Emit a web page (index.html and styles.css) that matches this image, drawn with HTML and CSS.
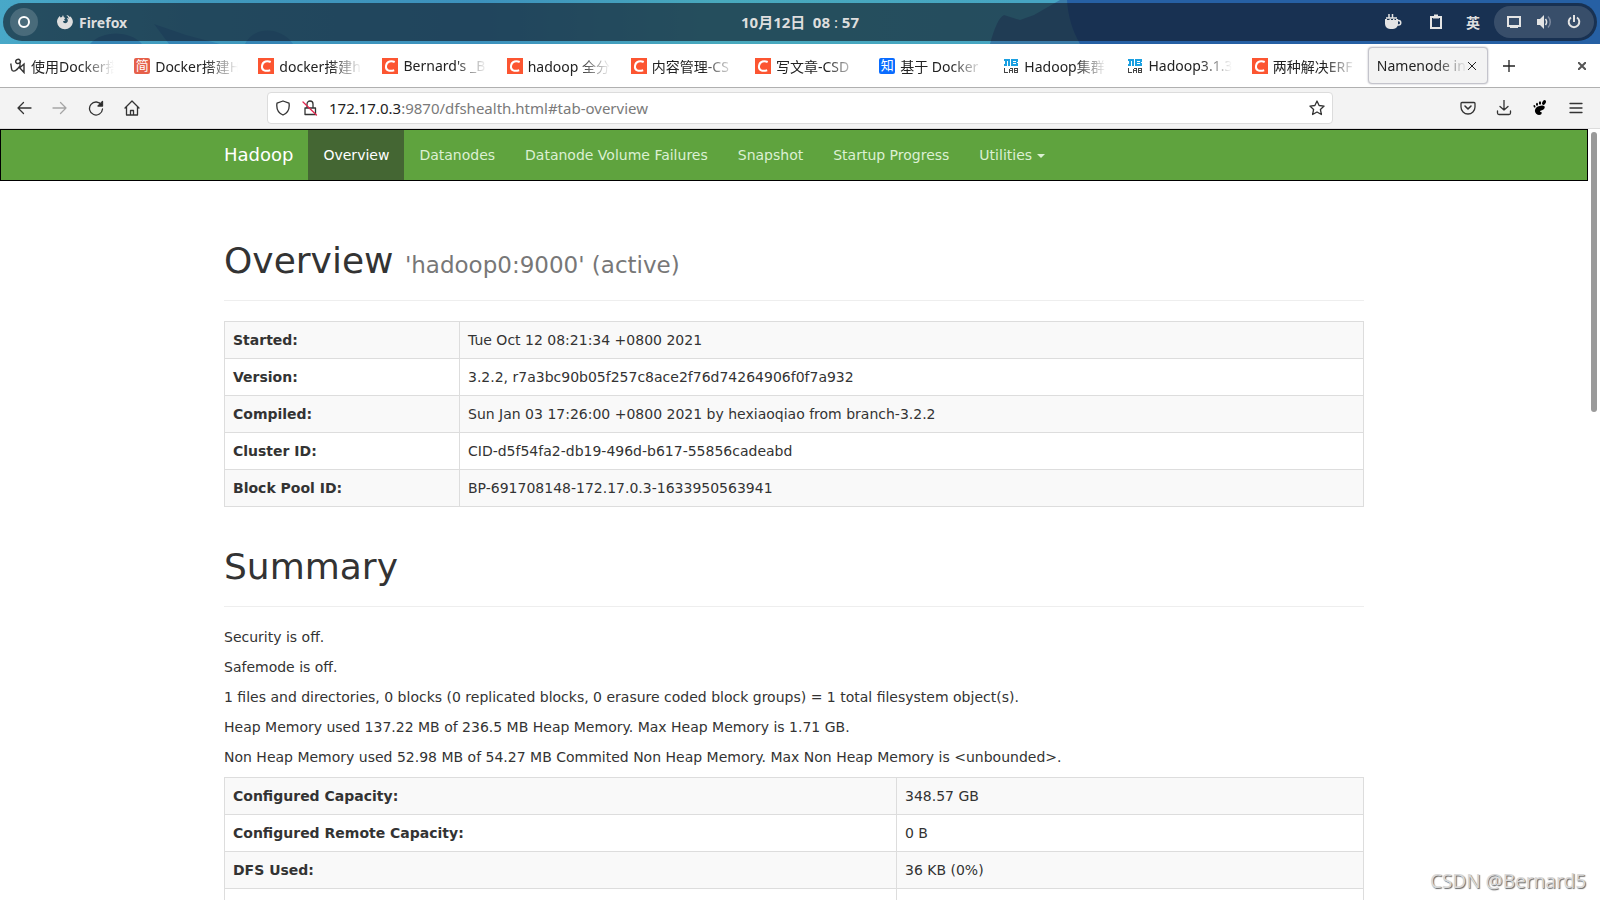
FILE: index.html
```html
<!DOCTYPE html>
<html lang="zh-CN">
<head>
    <meta charset="UTF-8">
    <meta name="viewport" content="width=device-width, initial-scale=1.0">
    <title>Namenode information</title>
    <link rel="stylesheet" href="styles.css">
</head>
<body>

    <svg class="defs" aria-hidden="true">
        <symbol id="csdn" viewBox="0 0 16 16">
            <rect width="16" height="16" fill="#fc5531"/>
            <path d="M12.700 4C9.500 2.400 4.800 2.800 4 7.800c-.7 4.800 3.600 5.800 8.200 4.400" fill="none" stroke="#fff" stroke-width="2"/>
        </symbol>
        <symbol id="dblab" viewBox="0 0 16 16" shape-rendering="crispEdges">
            <path d="M1 1h6v7H5V3H4v5H1V6h1V3H1zM8 1h6l1 1v2l-1 .5 1 .5v2l-1 1H8zM10 3v1h3V3zM10 5v1h3V5z" fill="#1ba0e1" fill-rule="evenodd"/>
            <path d="M1 10h1v4h3v1H1zM6 11l1-1h2l1 1v4H9v-2H7v2H6zM7 11v1h2v-1zM11 10h4v5h-4zM12 11v1h2v-1zM12 13v1h2v-1z" fill="#444" fill-rule="evenodd"/>
        </symbol>
    </svg>

    <header class="topbar">
        <svg class="wallpaper" viewBox="0 0 1600 44" preserveAspectRatio="none" aria-hidden="true">
            <defs>
                <linearGradient id="sea">
                    <stop offset="0" stop-color="#48a8c8"/>
                    <stop offset=".12" stop-color="#4099bd"/>
                    <stop offset=".3" stop-color="#3c91bd"/>
                    <stop offset=".45" stop-color="#48a9bd"/>
                    <stop offset=".64" stop-color="#46a5c2"/>
                    <stop offset="1" stop-color="#46a5c2"/>
                </linearGradient>
            </defs>
            <rect width="1600" height="44" fill="url(#sea)"/>
            <path d="M154 24l32 11 34 9h-51zM90 44c12-14 40-14 52 0zM245 44c8-18 36-18 48 0z" fill="#3585b5"/>
            <path d="M990 44c4-14 8-26 14-29l16 5 14-5 26-15h10l20 44z" fill="#3a7ba8"/>
            <path d="M1067 0h533v44h-520c-8-14-12-28-13-44z" fill="#2660a4"/>
        </svg>
        <div class="panel">
            <div class="panel-left">
                <button class="activities" aria-label="活动"><span></span></button>
                <button class="app-menu">
                    <svg width="16" height="16" viewBox="0 0 16 16" fill="#dedede"><path d="M1.500 3.500L2.700 2l.8 1.500L5 3l1-2 .9 2.300 1.500.7L7 5.500l1.400 1L6 7.300c.2 2 2.500 2.400 4 1.200 1.400-1.300 1-3.600-.3-4.600 1 0 1.600.5 2 1-.2-2-1.200-3-2.500-4 2 .1 3 1.200 3.800 2.400l.2-1c1.600 1.500 2.800 3.500 2.700 6A8 8 0 010 8c0-1.800.6-3.400 1.500-4.500z"/></svg>
                    Firefox
                </button>
            </div>
            <time class="clock">10月12日&ensp;08 <span>:</span> 57</time>
            <div class="panel-right">
                <svg class="coffee" width="18" height="16" viewBox="0 0 18 16"><path d="M1 5h13v5a5.500 5.500 0 01-5 5H6a5.500 5.500 0 01-5-5z" fill="#e4e4e4"/><path d="M13 6.500h1.500a1.800 1.800 0 010 4.500H13M5 0v4M8.500 0v4M2 4h11" fill="none" stroke="#e4e4e4" stroke-width="1.500"/><path d="M3 5.500h2.500M7 5.500h2M10.500 5.500H12" stroke="#18304c"/></svg>
                <svg width="14" height="16" viewBox="0 0 14 16" fill="none" stroke="#e4e4e4" stroke-width="2"><path d="M2 3h10v11H2z"/><path d="M4 3.500h6M5 1.500h4"/></svg>
                <span class="ime">英</span>
                <div class="status">
                    <svg width="16" height="16" viewBox="0 0 16 16"><path d="M2 3h12v9H2z" fill="none" stroke="#e4e4e4" stroke-width="2"/><path d="M4 12h8v2H4z" fill="#e4e4e4"/></svg>
                    <svg width="16" height="16" viewBox="0 0 16 16"><path d="M1 5h3l4-4v14l-4-4H1z" fill="#e4e4e4"/><path d="M9.500 5c1.500 2 1.500 4 0 6" fill="none" stroke="#e4e4e4" stroke-width="1.500"/><path d="M12 2.500c3 3 3 8 0 11" fill="none" stroke="#7f8ba0" stroke-width="1.500"/></svg>
                    <svg width="16" height="16" viewBox="0 0 16 16" fill="none" stroke="#e4e4e4" stroke-width="2"><path d="M5 3.500a5.300 5.300 0 106 0M8 1v7"/></svg>
                </div>
            </div>
        </div>
    </header>

    <div class="tabbar">
        <nav class="tabs">
            <a class="tab" href="#"><svg viewBox="0 0 16 16" fill="none" stroke="#333" stroke-width="1.400"><path d="M.7 5.500C1.500 8 1 11 2.200 12.500c1.300 1 3.300.5 5-1.500M9.500 5.500a2.300 2.300 0 10-3.500-.8c1 1.500 4.500 1 4.500-2.200M10 4v4L6.500 12M9 9l5 5.500V6L9.500 10"/></svg><span>使用Docker搭</span></a>
            <a class="tab" href="#"><i class="fav jian">简</i><span>Docker搭建H</span></a>
            <a class="tab" href="#"><svg><use href="#csdn"/></svg><span>docker搭建h</span></a>
            <a class="tab" href="#"><svg><use href="#csdn"/></svg><span>Bernard's _B</span></a>
            <a class="tab" href="#"><svg><use href="#csdn"/></svg><span>hadoop 全分</span></a>
            <a class="tab" href="#"><svg><use href="#csdn"/></svg><span>内容管理-CS</span></a>
            <a class="tab" href="#"><svg><use href="#csdn"/></svg><span>写文章-CSD</span></a>
            <a class="tab" href="#"><i class="fav zhi">知</i><span>基于 Docker</span></a>
            <a class="tab" href="#"><svg><use href="#dblab"/></svg><span>Hadoop集群</span></a>
            <a class="tab" href="#"><svg><use href="#dblab"/></svg><span>Hadoop3.1.3</span></a>
            <a class="tab" href="#"><svg><use href="#csdn"/></svg><span>两种解决ERF</span></a>
            <div class="tab active"><span>Namenode inf</span><button aria-label="关闭标签页"><svg width="10" height="10" viewBox="0 0 10 10" stroke="#222"><path d="M1 1l8 8M9 1L1 9"/></svg></button></div>
        </nav>
        <button class="new-tab" aria-label="新建标签页"><svg width="12" height="12" viewBox="0 0 12 12" stroke="#222" stroke-width="1.300"><path d="M6 0v12M0 6h12"/></svg></button>
        <button class="close-window" aria-label="关闭"><svg width="8" height="8" viewBox="0 0 8 8" stroke="#555" stroke-width="2"><path d="M0 0l8 8M8 0L0 8"/></svg></button>
    </div>

    <div class="toolbar">
        <div class="tools">
            <button aria-label="后退"><svg viewBox="0 0 16 16"><path d="M15 8H2M7.500 2.500L2 8l5.500 5.500"/></svg></button>
            <button aria-label="前进" class="disabled" disabled><svg viewBox="0 0 16 16"><path d="M1 8h13M8.500 2.500L14 8l-5.500 5.500"/></svg></button>
            <button aria-label="刷新"><svg viewBox="0 0 16 16"><path d="M13.500 5A6.500 6.500 0 1014.500 9"/><path d="M14.500 1.500v4.500H10z" fill="#222"/></svg></button>
            <button aria-label="主页"><svg viewBox="0 0 16 16"><path d="M1 8l7-7 7 7M2.500 7v8h11V7M6.500 15v-4.500h3V15"/></svg></button>
        </div>
        <div class="urlbar">
            <svg viewBox="0 0 16 16"><path d="M8 1l6 2.200c.8 5-1 9.500-6 11.800-5-2.300-6.800-6.800-6-11.800z"/></svg>
            <svg viewBox="0 0 16 16"><path d="M3 8h10.500v6.500H3zM5 8V4a3 3 0 016 0v4"/><path class="slash" d="M1 2l13.500 13"/></svg>
            <div class="url" role="textbox" aria-label="地址" contenteditable="true" spellcheck="false"><b>172.17.0.3</b>:9870/dfshealth.html#tab-overview</div>
            <button aria-label="书签"><svg viewBox="0 0 16 16"><path d="M8 1l2.100 4.500 5 .6-3.700 3.400 1 5L8 12l-4.400 2.500 1-5L.9 6.100l5-.6z"/></svg></button>
        </div>
        <div class="tools tools-right">
            <button aria-label="Pocket"><svg viewBox="0 0 16 16"><path d="M2 2.500h12q1 0 1 1V7a7 7 0 01-14 0V3.500q0-1 1-1z"/><path d="M5 6l3 3 3-3" stroke-width="1.600"/></svg></button>
            <button aria-label="下载"><svg viewBox="0 0 16 16"><path d="M8 0v10M4 6.500L8 10l4-3.500M1.500 11v2q0 1.500 1.500 1.500h10q1.500 0 1.500-1.500v-2"/></svg></button>
            <button aria-label="GNOME"><svg viewBox="0 0 16 16"><g fill="#000" stroke="none"><path d="M10 5.500c3.500-.2 3.500 3 1 4.200-1.500.8-2.500.6-3 1.500 0 1 1.500.2 1.700 1.500.2 2.500-3.500 3-5.500 1C1.500 11 3 6 10 5.500z"/><ellipse cx="12" cy="2.500" rx="1.700" ry="2.500" transform="rotate(30 12 2.500)"/><ellipse cx="8" cy="3" rx="1.100" ry="1.800"/><ellipse cx="5" cy="4.300" rx="1" ry="1.500"/><ellipse cx="2.500" cy="6.300" rx=".9" ry="1.300" transform="rotate(-25 2.500 6.300)"/></g></svg></button>
            <button aria-label="菜单"><svg viewBox="0 0 16 16"><path d="M2 3.500h12M2 8h12M2 12.500h12"/></svg></button>
        </div>
    </div>

    <div class="viewport">
        <div class="page">
            <nav class="navbar">
                <div class="container">
                    <a class="brand" href="#">Hadoop</a>
                    <a class="active" href="#">Overview</a>
                    <a href="#">Datanodes</a>
                    <a href="#">Datanode Volume Failures</a>
                    <a href="#">Snapshot</a>
                    <a href="#">Startup Progress</a>
                    <a href="#">Utilities <span class="caret"></span></a>
                </div>
            </nav>

            <main class="container">
                <div class="page-header">
                    <h1>Overview <small>'hadoop0:9000' (active)</small></h1>
                </div>
                <table class="info">
                    <tr><th>Started:</th><td>Tue Oct 12 08:21:34 +0800 2021</td></tr>
                    <tr><th>Version:</th><td>3.2.2, r7a3bc90b05f257c8ace2f76d74264906f0f7a932</td></tr>
                    <tr><th>Compiled:</th><td>Sun Jan 03 17:26:00 +0800 2021 by hexiaoqiao from branch-3.2.2</td></tr>
                    <tr><th>Cluster ID:</th><td>CID-d5f54fa2-db19-496d-b617-55856cadeabd</td></tr>
                    <tr><th>Block Pool ID:</th><td>BP-691708148-172.17.0.3-1633950563941</td></tr>
                </table>

                <div class="page-header">
                    <h1>Summary</h1>
                </div>
                <p>Security is off.</p>
                <p>Safemode is off.</p>
                <p>1 files and directories, 0 blocks (0 replicated blocks, 0 erasure coded block groups) = 1 total filesystem object(s).</p>
                <p>Heap Memory used 137.22 MB of 236.5 MB Heap Memory. Max Heap Memory is 1.71 GB.</p>
                <p>Non Heap Memory used 52.98 MB of 54.27 MB Commited Non Heap Memory. Max Non Heap Memory is &lt;unbounded&gt;.</p>
                <table class="summary">
                    <tr><th>Configured Capacity:</th><td>348.57 GB</td></tr>
                    <tr><th>Configured Remote Capacity:</th><td>0 B</td></tr>
                    <tr><th>DFS Used:</th><td>36 KB (0%)</td></tr>
                    <tr><th>&nbsp;</th><td></td></tr>
                </table>
            </main>
        </div>
        <div class="scrollbar"><div class="thumb"></div></div>
    </div>

    <div class="watermark">CSDN @Bernard5</div>
</body>
</html>
```

FILE: styles.css
```css
* {
    box-sizing: border-box;
}

body {
    margin: 0;
    height: 100vh;
    display: flex;
    flex-direction: column;
    overflow: hidden;
    background-color: #fff;
    font-family: "Noto Sans", "Noto Sans CJK SC", sans-serif;
    font-size: 15px;
    color: #222;
}

button {
    display: flex;
    align-items: center;
    justify-content: center;
    padding: 0;
    border: 0;
    background: none;
    font: inherit;
    color: inherit;
}

a {
    color: inherit;
    text-decoration: none;
}

svg {
    flex: none;
}

.defs {
    position: absolute;
    width: 0;
    height: 0;
}

/* desktop panel */
.topbar {
    position: relative;
    flex: none;
    height: 44px;
    padding: 3px;
}

.wallpaper {
    position: absolute;
    inset: 0;
    width: 100%;
    height: 100%;
}

.panel {
    position: relative;
    display: grid;
    grid-template-columns: 1fr auto 1fr;
    align-items: center;
    height: 38px;
    border-radius: 19px;
    background-color: rgba(15, 18, 28, .6);
    color: #dedede;
    font-size: 14px;
    font-weight: bold;
}

.panel-left {
    display: flex;
    align-items: center;
    gap: 19px;
    padding-left: 7px;
}

.activities {
    width: 28px;
    height: 28px;
    border-radius: 50%;
    background-color: rgba(255, 255, 255, .17);
}

.activities span {
    width: 12px;
    height: 12px;
    border: 2px solid #fff;
    border-radius: 50%;
}

.app-menu {
    gap: 6px;
}

.clock {
    font-size: 15px;
    line-height: 20px;
}

.clock span {
    font-weight: normal;
}

.panel-right {
    display: flex;
    align-items: center;
    justify-content: flex-end;
    gap: 23px;
    padding-right: 3px;
}

.coffee {
    margin-right: 4px;
}

.status {
    display: flex;
    align-items: center;
    gap: 14px;
    height: 32px;
    margin-left: -9px;
    padding: 0 12px;
    border-radius: 16px;
    background-color: rgba(255, 255, 255, .14);
}

/* browser tabs */
.tabbar {
    display: flex;
    align-items: center;
    flex: none;
    height: 44px;
    border-bottom: 1px solid #b0b0b0;
}

.tabs {
    flex: 1;
    display: grid;
    grid-template-columns: repeat(12, minmax(0, 1fr));
    font-size: 14px;
}

.tab {
    display: flex;
    align-items: center;
    gap: 5px;
    height: 37px;
    padding: 0 10px;
    white-space: nowrap;
}

.tab > svg,
.fav {
    flex: none;
    width: 16px;
    height: 16px;
}

.fav {
    border-radius: 2px;
    color: #fff;
    font-size: 13px;
    font-style: normal;
    line-height: 15px;
    text-align: center;
}

.jian {
    background-color: #e6604a;
}

.zhi {
    background-color: #0a6cff;
}

.tab span {
    flex: 1;
    overflow: hidden;
    mask-image: linear-gradient(to left, transparent, #000 32px);
}

.tab.active {
    gap: 0;
    margin: 0 2px;
    padding: 0 10px 0 8px;
    border: 1px solid #c4c4cc;
    border-radius: 4px;
    background-color: #f3f3f3;
    box-shadow: 0 0 2px #b0b0b8;
}

.new-tab {
    width: 38px;
    height: 36px;
}

.close-window {
    width: 36px;
    height: 36px;
    margin-left: 36px;
}

/* address row */
.toolbar {
    display: grid;
    grid-template-columns: 267px 1fr 267px;
    align-items: center;
    flex: none;
    height: 41px;
    border-bottom: 1px solid #dcdcdc;
    background-color: #f3f3f3;
}

.toolbar svg {
    width: 16px;
    height: 16px;
    fill: none;
    stroke: #333;
    stroke-width: 1.3;
    stroke-linejoin: round;
    stroke-linecap: round;
}

.toolbar .slash {
    stroke: #e22850;
}

.tools {
    display: flex;
    gap: 4px;
    padding: 0 8px;
}

.tools button {
    width: 32px;
    height: 32px;
}

.tools-right {
    justify-content: flex-end;
}

.disabled {
    opacity: .4;
}

.urlbar {
    display: flex;
    align-items: center;
    gap: 11px;
    height: 32px;
    padding: 0 7px;
    border: 1px solid #dcdcdc;
    border-radius: 4px;
    background-color: #fff;
}

.url {
    flex: 1;
    color: #7a7a7a;
    white-space: nowrap;
}

.url b {
    color: #222;
    font-weight: normal;
}

/* page area */
.viewport {
    flex: 1;
    display: flex;
    min-height: 0;
    overflow: hidden;
}

.page {
    flex: 1;
    overflow: hidden;
    font-family: "DejaVu Sans", sans-serif;
    font-size: 14px;
    line-height: 20px;
    color: #333;
}

.container {
    max-width: 1140px;
    margin: 0 auto;
}

main {
    display: flow-root;
}

.navbar {
    margin-bottom: 20px;
    border: 1px solid #000;
    background-color: #5fa33e;
}

.navbar .container {
    display: flex;
}

.navbar a {
    padding: 15px;
    color: #dcf0d3;
}

.navbar .brand {
    padding-left: 0;
    color: #fff;
    font-size: 18px;
}

.navbar .active {
    background-color: #446633;
    color: #fff;
}

.caret {
    display: inline-block;
    vertical-align: middle;
    border-top: 4px solid;
    border-right: 4px solid transparent;
    border-left: 4px solid transparent;
}

.page-header {
    margin: 40px 0 20px;
    padding-bottom: 9px;
    border-bottom: 1px solid #eee;
}

h1 {
    margin: 0 0 10px;
    font-size: 36px;
    font-weight: normal;
    line-height: 40px;
}

h1 small {
    color: #777;
    font-size: 23px;
    line-height: 1;
}

p {
    margin: 0 0 10px;
}

table {
    width: 100%;
    border-collapse: collapse;
}

th,
td {
    padding: 8px;
    border: 1px solid #ddd;
    text-align: left;
}

tr:nth-child(odd) {
    background-color: #f9f9f9;
}

.info th {
    width: 235px;
}

.summary th {
    width: 59%;
}

.scrollbar {
    width: 12px;
    padding: 3px;
}

.thumb {
    width: 6px;
    height: 280px;
    border-radius: 3px;
    background-color: #9a9a9a;
}

.watermark {
    position: absolute;
    right: 14px;
    bottom: 6px;
    color: #d8d8d8;
    font-size: 19px;
    text-shadow: 1px 1px 1px #666;
}
```
